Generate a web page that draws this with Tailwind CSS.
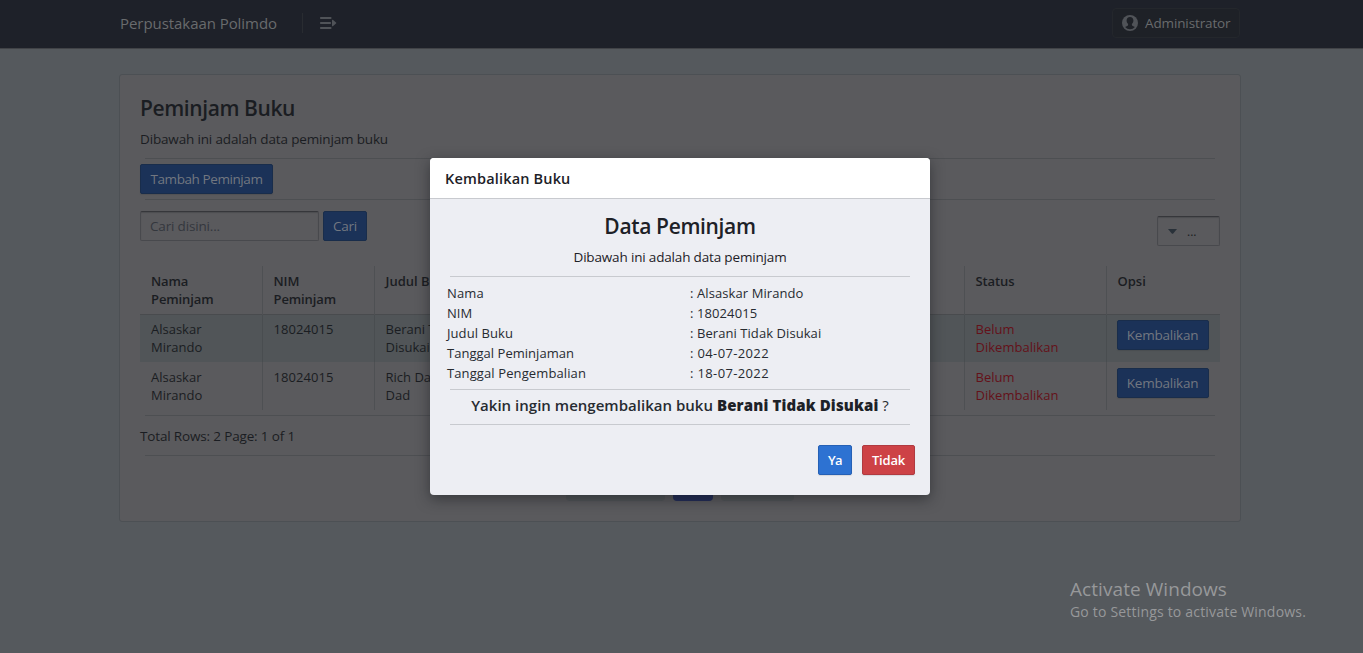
<!DOCTYPE html>
<html lang="id">
<head>
<meta charset="utf-8">
<title>Perpustakaan Polimdo</title>
<script src="https://cdn.jsdelivr.net/npm/@tailwindcss/browser@4"></script>
</head>
<body class="relative h-[653px] w-[1363px] overflow-hidden bg-[#55595d] font-['Open_Sans',sans-serif] text-[13px] text-[#1a1d22]">

<!-- Top bar -->
<header class="h-[49px] border-b border-[#414347] bg-[#1e2129]">
  <div class="mx-[120px] flex h-12 w-[1120px] items-center pb-[2px] text-[#696b6d]">
    <span class="w-[182px] text-[15px] tracking-[-0.057px]">Perpustakaan Polimdo</span>
    <span class="h-5 w-px bg-[#292c31]"></span>
    <svg class="ml-[17px] h-3 w-[17px]" viewBox="0 0 17 12" fill="#505358"><rect width="11.5" height="2" rx=".8"/><rect y="5" width="11" height="2" rx=".8"/><rect y="10" width="11.5" height="2" rx=".8"/><path d="M12 3.6c0-.9.6-1.1 1.1-.6l2.9 2.4c.5.4.5.8 0 1.200L13.100 9c-.5.5-1.100.3-1.100-.6z"/></svg>
    <a class="ml-auto flex h-[30px] w-32 items-center rounded-sm border border-[#24272c] bg-[#1e2127] pl-[9px]">
      <svg class="h-4 w-4" viewBox="0 0 16 16"><circle cx="8" cy="8" r="8" fill="#505358"/><path fill="#1e2127" d="M8 1.900c2.200 0 3.400 1.600 3.400 3.500 0 1.500-.6 2.700-1.500 3.500v1.200c0 .5.300.8.9 1l2.100.8A6.300 6.300 0 0 1 8 14.300a6.300 6.300 0 0 1-4.900-2.400l2.100-.8c.6-.2.9-.5.900-1V8.900C5.200 8.100 4.600 6.900 4.600 5.400c0-1.900 1.200-3.500 3.400-3.500z"/></svg>
      <span class="ml-[7px] text-[13.5px] tracking-[-0.124px]">Administrator</span>
    </a>
  </div>
</header>

<!-- Borrower list -->
<main class="mx-[119px] mt-[25px] flex h-[448px] w-[1122px] flex-col rounded-[3px] border border-[#4c5054] bg-[#5a5a5d] px-5">
  <h1 class="mt-[18px] h-[30px] text-[21px]/[30px] font-semibold tracking-[-0.41px]">Peminjam Buku</h1>
  <p class="mt-[6px] h-5 text-[13.5px]/5 tracking-[-0.155px]">Dibawah ini adalah data peminjam buku</p>
  <hr class="mx-[5px] mt-[9px] border-[#4d4f52]">
  <div class="mt-[5px] flex">
    <button class="h-[30px] w-[133px] rounded-xs border border-[#192d4b] bg-[#1b3258] text-[13.5px] tracking-[-0.419px] text-[#727780] shadow-[0_1px_1px_rgba(17,20,24,0.1)]">Tambah Peminjam</button>
  </div>
  <hr class="mx-[5px] mt-[5px] border-[#4d4f52]">
  <div class="mt-[11px] flex h-9 items-start gap-1">
    <div class="flex h-[30px] w-[179px] items-center rounded-xs border border-[#48494d] border-t-[#36373b] pl-[9px] text-[13.5px] tracking-[-0.163px] text-[#34373d] shadow-[inset_0_1px_1px_rgba(17,20,24,0.18)]">Cari disini...</div>
    <button class="h-[30px] w-11 rounded-xs border border-[#192d4b] bg-[#1b3258] text-[13.5px] tracking-[-0.234px] text-[#727780]">Cari</button>
    <div class="ml-auto mt-[5px] flex h-[30px] w-[63px] items-center gap-[10px] rounded-xs border border-[#48494d] border-t-[#36373b] pl-[10px] shadow-[inset_0_1px_1px_rgba(17,20,24,0.18)]">
      <svg class="h-[5px] w-[9px]" viewBox="0 0 9 5"><path fill="#293139" d="M0 0h9L5 4.800H4z"/></svg>
      <span class="pt-px text-[12px]">...</span>
    </div>
  </div>
  <table class="mt-[19px] w-[1080px] table-fixed border-collapse text-left text-[13px]/[18px]">
    <colgroup><col class="w-[122px]"><col class="w-[112px]"><col class="w-[122px]"><col class="w-[468px]"><col class="w-[142px]"><col class="w-[114px]"></colgroup>
    <thead>
      <tr class="h-[48px] border-b border-[#494b4e] align-top">
        <th class="border-r border-[#4e5053] px-[11px] pt-[6px] font-semibold tracking-[-0.105px]">Nama Peminjam</th>
        <th class="border-r border-[#4e5053] px-[11px] pt-[6px] font-semibold tracking-[-0.105px]">NIM<br>Peminjam</th>
        <th class="border-r border-[#4e5053] px-[11px] pt-[6px] font-semibold">Judul Buku</th>
        <th class="border-r border-[#4e5053]"></th>
        <th class="border-r border-[#4e5053] px-[11px] pt-[6px] font-semibold tracking-[-0.094px]">Status</th>
        <th class="px-[11px] pt-[6px] font-semibold">Opsi</th>
      </tr>
    </thead>
    <tbody class="align-top">
      <tr class="h-[48px] bg-[#515558]">
        <td class="border-r border-[#494d50] px-[11px] pt-[5px]">Alsaskar Mirando</td>
        <td class="border-r border-[#494d50] px-[11px] pt-[5px] tracking-[0.06px]">18024015</td>
        <td class="border-r border-[#494d50] px-[11px] pt-[5px]">Berani Tidak Disukai</td>
        <td class="border-r border-[#494d50]"></td>
        <td class="border-r border-[#494d50] px-[11px] pt-[5px] tracking-[0.02px] text-[#641119]">Belum Dikembalikan</td>
        <td class="px-[10px] pt-[5px]"><button class="block h-[30px] w-[92px] rounded-xs border border-[#192d4b] bg-[#1b3258] text-[13.5px] tracking-[-0.230px] text-[#727780] shadow-[0_1px_1px_rgba(17,20,24,0.1)]">Kembalikan</button></td>
      </tr>
      <tr class="h-[48px]">
        <td class="border-r border-[#4e5053] px-[11px] pt-[6px]">Alsaskar Mirando</td>
        <td class="border-r border-[#4e5053] px-[11px] pt-[6px] tracking-[0.06px]">18024015</td>
        <td class="border-r border-[#4e5053] px-[11px] pt-[6px]">Rich Dad Poor Dad</td>
        <td class="border-r border-[#4e5053]"></td>
        <td class="border-r border-[#4e5053] px-[11px] pt-[6px] tracking-[0.02px] text-[#641119]">Belum Dikembalikan</td>
        <td class="px-[10px] pt-[6px]"><button class="block h-[30px] w-[92px] rounded-xs border border-[#192d4b] bg-[#1b3258] text-[13.5px] tracking-[-0.230px] text-[#727780] shadow-[0_1px_1px_rgba(17,20,24,0.1)]">Kembalikan</button></td>
      </tr>
    </tbody>
  </table>
  <hr class="mx-[5px] mt-[5px] border-[#4d4f52]">
  <p class="mt-[10px] h-5 text-[13.5px]/5 tracking-[-0.159px]">Total Rows: 2 Page: 1 of 1</p>
  <hr class="mx-[5px] mt-[9px] border-[#4d4f52]">
  <nav class="mt-[15px] flex h-[30px] justify-center gap-2">
    <span class="w-[99px] rounded bg-[#515558]"></span>
    <span class="w-10 rounded bg-[#212c58]"></span>
    <span class="w-[73px] rounded bg-[#515558]"></span>
  </nav>
</main>

<!-- Return dialog -->
<section class="absolute left-[430px] top-[158px] flex h-[337px] w-[500px] flex-col overflow-hidden rounded-[4px] bg-[#edeef3] text-[#1d2127] shadow-[0_4px_14px_rgba(20,22,26,0.5)]">
  <header class="h-[41px] border-b border-[#c8cacf] bg-white pl-[15px] text-[14.5px]/[41px] font-semibold tracking-[0.17px]">Kembalikan Buku</header>
  <h2 class="mt-[12px] text-center text-[21px]/[30px] font-semibold tracking-[-0.35px]">Data Peminjam</h2>
  <p class="mt-[6px] text-center text-[13.5px]/5 tracking-[-0.166px]">Dibawah ini adalah data peminjam</p>
  <hr class="mx-5 mt-[9px] border-[#c8cacf]">
  <dl class="mt-[6px] grid grid-cols-[243px_1fr] pl-[17px] text-[13px]/5 text-[#272b31]">
    <dt class="tracking-[0.18px]">Nama</dt><dd class="tracking-[0.09px]">: Alsaskar Mirando</dd>
    <dt>NIM</dt><dd class="tracking-[0.1px]">: 18024015</dd>
    <dt class="tracking-[0.08px]">Judul Buku</dt><dd class="tracking-[0.07px]">: Berani Tidak Disukai</dd>
    <dt class="tracking-[0.027px]">Tanggal Peminjaman</dt><dd class="tracking-[0.36px]">: 04-07-2022</dd>
    <dt class="tracking-[0.111px]">Tanggal Pengembalian</dt><dd class="tracking-[0.36px]">: 18-07-2022</dd>
  </dl>
  <hr class="mx-5 mt-[6px] border-[#c8cacf]">
  <p class="mt-[5px] text-center text-[15px]/5 font-semibold text-[#272b31]"><span class="tracking-[0.02px]">Yakin ingin mengembalikan buku</span> <b class="font-extrabold tracking-[0.13px] text-[#1d2127]">Berani Tidak Disukai</b> <span class="font-normal">?</span></p>
  <hr class="mx-5 mt-[9px] border-[#c8cacf]">
  <div class="mt-5 flex justify-end gap-[10px] pr-[15px] text-[13px] font-semibold text-white">
    <button class="h-[30px] w-[34px] rounded-xs border border-[#2560b5] bg-[#2d72d2] pt-px tracking-[-0.7px] shadow-[0_1px_1px_rgba(17,20,24,0.1)]">Ya</button>
    <button class="h-[30px] w-[53px] rounded-xs border border-[#b03a40] bg-[#cd4246] pt-px tracking-[-0.2px] shadow-[0_1px_1px_rgba(17,20,24,0.1)]">Tidak</button>
  </div>
</section>

<!-- Activation notice -->
<aside class="absolute left-[1070px] top-[577px] whitespace-nowrap text-[#97989a]">
  <p class="text-[19px]/[25px] tracking-[0.066px]">Activate Windows</p>
  <p class="text-[14px]/5 tracking-[0.189px]">Go to Settings to activate Windows.</p>
</aside>
</body>
</html>
